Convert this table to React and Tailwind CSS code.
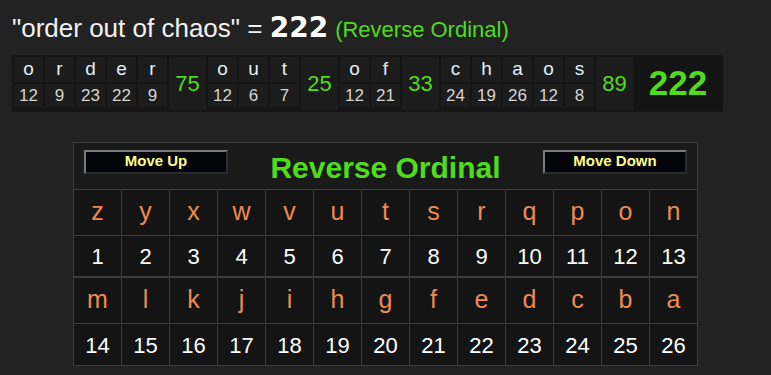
const WORDS = [
  { letters: [['o', 12], ['r', 9], ['d', 23], ['e', 22], ['r', 9]], sum: 75 },
  { letters: [['o', 12], ['u', 6], ['t', 7]], sum: 25 },
  { letters: [['o', 12], ['f', 21]], sum: 33 },
  { letters: [['c', 24], ['h', 19], ['a', 26], ['o', 12], ['s', 8]], sum: 89 },
]

const ALPHABET = 'zyxwvutsrqponmlkjihgfedcba'.split('')

function Breakdown() {
  return (
    <div className="flex w-fit gap-[2px] bg-[#151515] p-[2px]">
      {WORDS.map((w, wi) => (
        <div key={wi} className="flex gap-[2px]">
          {w.letters.map(([ch, n], i) => (
            <div key={i} className="flex w-[29px] flex-col gap-[2px]">
              <div className="flex h-[25px] items-center justify-center bg-[#1c1c1c] text-[19px] text-[#e4eef8]">{ch}</div>
              <div className="flex h-[23px] items-center justify-center bg-[#1c1c1c] text-[17px] text-[#d4d4d4]">{n}</div>
            </div>
          ))}
          <div className="flex w-[37px] items-center justify-center bg-[#1c1c1c] text-[22px] text-[#4fdc1c]">{w.sum}</div>
        </div>
      ))}
      <div className="flex w-[86px] items-center justify-center bg-[#141414] text-[35px] font-bold text-[#4fdc1c]">222</div>
    </div>
  )
}

function MoveButton({ label }) {
  return (
    <button className="flex h-[24px] w-[144px] items-center justify-center border-2 border-t-[#7a7a7a] border-l-[#7a7a7a] border-r-[#2c2c2c] border-b-[#2c2c2c] bg-[#03030a] text-[15px] font-bold text-[#ffff88]">
      {label}
    </button>
  )
}

function CipherGrid() {
  const rows = [ALPHABET.slice(0, 13), ALPHABET.slice(13)]
  return (
    <div className="w-[625px] border-l border-t border-[#3c3c3c] bg-[#141414]">
      <div className="flex h-[47px] items-start justify-between border-b border-r border-[#3c3c3c] bg-[#1a1a1a] pl-[10px] pr-[10px] pt-[7px]">
        <MoveButton label="Move Up" />
        <div className="mt-[2px] text-[30px] font-bold leading-[32px] text-[#4fdc1c]">Reverse Ordinal</div>
        <MoveButton label="Move Down" />
      </div>
      {rows.map((row, ri) => (
        <div key={ri}>
          <div className="grid grid-cols-[repeat(13,48px)]">
            {row.map((ch) => (
              <div key={ch} className="flex h-[46px] items-center justify-center border-b border-r border-[#3c3c3c] text-[25px] text-[#ef8a50]">{ch}</div>
            ))}
          </div>
          <div className="grid grid-cols-[repeat(13,48px)]">
            {row.map((ch, i) => (
              <div key={ch} className={`flex h-[42px] items-center justify-center border-r border-[#3c3c3c] pt-[2px] text-[22px] text-white ${ri === 0 ? 'border-b-2' : 'border-b'}`}>
                {ri * 13 + i + 1}
              </div>
            ))}
          </div>
        </div>
      ))}
    </div>
  )
}

export default function App() {
  return (
    <div className="min-h-screen bg-[#222222] font-['Liberation_Sans',Arial,sans-serif]">
      <div className="flex items-baseline pl-[12px] pt-[13px] leading-[30px]">
        <span className="text-[26px] text-[#f2f2f2]">"order out of chaos" =&nbsp;</span>
        <span className="font-['DejaVu_Sans',sans-serif] text-[28px] font-bold text-white">222</span>
        <span className="ml-[7px] text-[22px] text-[#4fdc1c]">(Reverse Ordinal)</span>
      </div>
      <div className="ml-[12px] mt-[10px]">
        <Breakdown />
      </div>
      <div className="ml-[73px] mt-[30px]">
        <CipherGrid />
      </div>
    </div>
  )
}
